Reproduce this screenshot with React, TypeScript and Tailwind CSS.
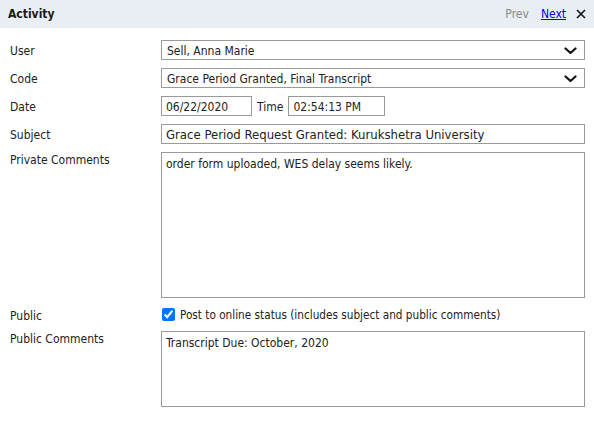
import React from 'react'

const font = "font-['Tahoma','DejaVu_Sans_Condensed','DejaVu_Sans',sans-serif]"

function Chevron() {
  return (
    <svg width="13" height="8" viewBox="0 0 13 8" className="shrink-0">
      <path d="M1.5 1.5 L6.5 6 L11.5 1.5" fill="none" stroke="#111" strokeWidth="2.2" strokeLinecap="round" strokeLinejoin="round" />
    </svg>
  )
}

function SelectBox({ value }: { value: string }) {
  return (
    <div className="flex h-[20px] items-center justify-between border border-[#9a9a9a] bg-white pl-[5px] pr-[7px] pt-[2px]">
      <span>{value}</span>
      <Chevron />
    </div>
  )
}

function Label({ children, top, h = 'h-[20px]' }: { children: React.ReactNode; top?: boolean; h?: string }) {
  return (
    <div className={top ? 'pt-[1px] leading-[14px]' : `flex ${h} items-center pt-[2px]`}>
      {children}
    </div>
  )
}

export default function App() {
  return (
    <div className={`${font} h-[426px] w-[594px] bg-white text-[12px] text-[#222]`}>
      <div className="flex h-[28px] items-center justify-between bg-[#e8eef4] pl-[8px] pr-[8px]">
        <span className="font-bold text-[#1a1a1a]">Activity</span>
        <div className="flex items-center">
          <span className="text-[#8a8a8a]">Prev</span>
          <a href="#" className="ml-[12px] text-[#0000ee] underline">Next</a>
          <svg width="10" height="10" viewBox="0 0 10 10" className="ml-[10px]">
            <path d="M1 1 L9 9 M9 1 L1 9" stroke="#111" strokeWidth="1.6" />
          </svg>
        </div>
      </div>

      <div className="grid grid-cols-[151px_424px] gap-y-[8px] pl-[10px] pt-[12px]">
        <Label>User</Label>
        <SelectBox value="Sell, Anna Marie" />

        <Label>Code</Label>
        <SelectBox value="Grace Period Granted, Final Transcript" />

        <Label>Date</Label>
        <div className="flex h-[20px] items-center">
          <div className="flex h-full w-[91px] items-center border border-[#9a9a9a] pl-[4px] pt-[2px]">06/22/2020</div>
          <span className="ml-[5px] mr-[5px] pt-[2px]">Time</span>
          <div className="flex h-full w-[97px] items-center border border-[#9a9a9a] pl-[4px] pt-[2px]">02:54:13 PM</div>
        </div>

        <Label>Subject</Label>
        <div className="flex h-[20px] items-center border border-[#9a9a9a] pl-[4px] pt-[2px] text-[13px]">
          Grace Period Request Granted: Kurukshetra University
        </div>

        <Label top>Private Comments</Label>
        <div className="h-[146px] border border-[#9a9a9a] px-[4px] pt-[4px] leading-[14px]">
          order form uploaded, WES delay seems likely.
        </div>

        <Label h="h-[17px]">Public</Label>
        <label className="flex h-[17px] items-center">
          <input type="checkbox" defaultChecked className="m-0 ml-[1px] h-[13px] w-[13px]" />
          <span className="ml-[5px] pt-[2px] text-[11.7px]">Post to online status (includes subject and public comments)</span>
        </label>

        <Label top>Public Comments</Label>
        <div className="h-[76px] border border-[#9a9a9a] px-[4px] pt-[4px] leading-[14px]">
          Transcript Due: October, 2020
        </div>
      </div>
    </div>
  )
}
